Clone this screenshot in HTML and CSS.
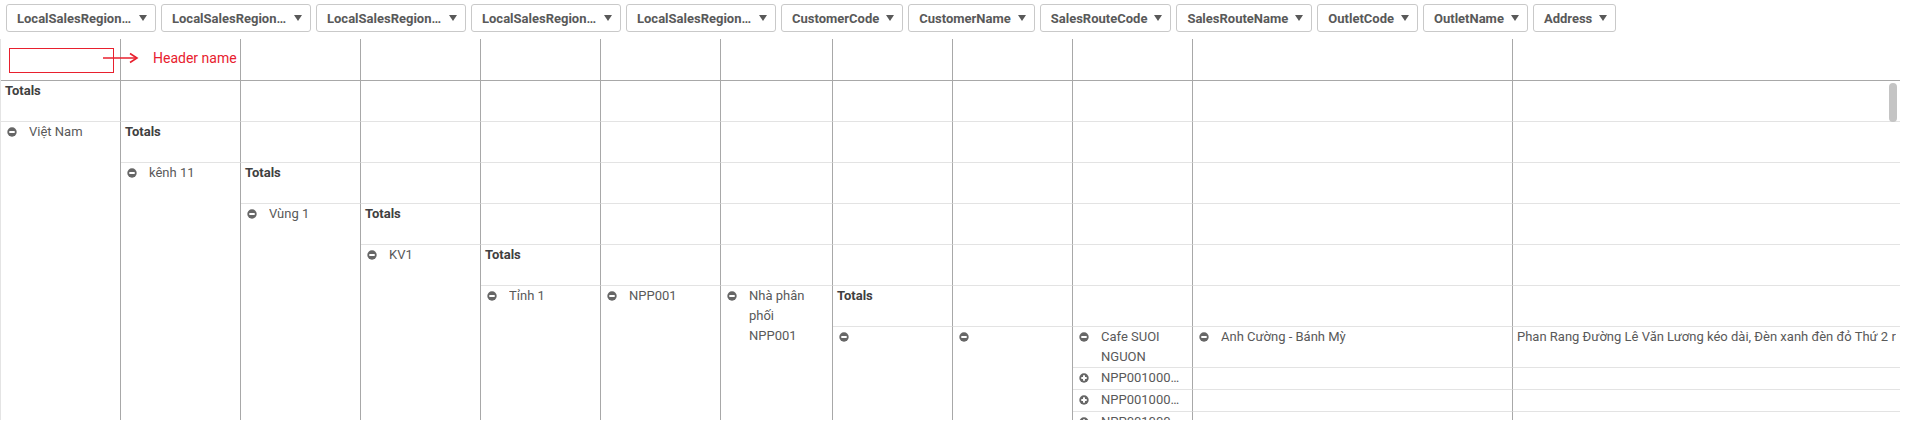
FILE: index.html
```html
<!DOCTYPE html>
<html lang="vi">
<head>
<meta charset="utf-8">
<title>Pivot table</title>
<link rel="stylesheet" href="styles.css">
</head>
<body>
<div class="sheet">
  <div class="toolbar">
    <button class="dim dim-fixed"><span class="dim-label">LocalSalesRegionLevel1</span><svg class="caret" viewBox="0 0 8 6"><path d="M0 0H8L4 6Z"/></svg></button>
    <button class="dim dim-fixed"><span class="dim-label">LocalSalesRegionLevel2</span><svg class="caret" viewBox="0 0 8 6"><path d="M0 0H8L4 6Z"/></svg></button>
    <button class="dim dim-fixed"><span class="dim-label">LocalSalesRegionLevel3</span><svg class="caret" viewBox="0 0 8 6"><path d="M0 0H8L4 6Z"/></svg></button>
    <button class="dim dim-fixed"><span class="dim-label">LocalSalesRegionLevel4</span><svg class="caret" viewBox="0 0 8 6"><path d="M0 0H8L4 6Z"/></svg></button>
    <button class="dim dim-fixed"><span class="dim-label">LocalSalesRegionLevel5</span><svg class="caret" viewBox="0 0 8 6"><path d="M0 0H8L4 6Z"/></svg></button>
    <button class="dim"><span class="dim-label">CustomerCode</span><svg class="caret" viewBox="0 0 8 6"><path d="M0 0H8L4 6Z"/></svg></button>
    <button class="dim"><span class="dim-label">CustomerName</span><svg class="caret" viewBox="0 0 8 6"><path d="M0 0H8L4 6Z"/></svg></button>
    <button class="dim"><span class="dim-label">SalesRouteCode</span><svg class="caret" viewBox="0 0 8 6"><path d="M0 0H8L4 6Z"/></svg></button>
    <button class="dim"><span class="dim-label">SalesRouteName</span><svg class="caret" viewBox="0 0 8 6"><path d="M0 0H8L4 6Z"/></svg></button>
    <button class="dim"><span class="dim-label">OutletCode</span><svg class="caret" viewBox="0 0 8 6"><path d="M0 0H8L4 6Z"/></svg></button>
    <button class="dim"><span class="dim-label">OutletName</span><svg class="caret" viewBox="0 0 8 6"><path d="M0 0H8L4 6Z"/></svg></button>
    <button class="dim"><span class="dim-label">Address</span><svg class="caret" viewBox="0 0 8 6"><path d="M0 0H8L4 6Z"/></svg></button>
  </div>

  <div class="pivot">
    <!-- header row -->
    <div class="cell head"></div><div class="cell head"></div><div class="cell head"></div><div class="cell head"></div>
    <div class="cell head"></div><div class="cell head"></div><div class="cell head"></div><div class="cell head"></div>
    <div class="cell head"></div><div class="cell head"></div><div class="cell head"></div><div class="cell head c-end"></div>

    <!-- grand totals: Totals + 11 empty -->
    <div class="cell total">Totals</div>
    <div class="cell"></div><div class="cell"></div><div class="cell"></div><div class="cell"></div><div class="cell"></div>
    <div class="cell"></div><div class="cell"></div><div class="cell"></div><div class="cell"></div><div class="cell"></div>
    <div class="cell c-end"></div>

    <!-- Việt Nam: node + Totals + 10 empty -->
    <div class="cell node span-9"><svg class="tog" viewBox="0 0 10 10"><circle cx="5" cy="5" r="4.7"/><rect x="2.3" y="4" width="5.4" height="2"/></svg><span class="txt">Việt Nam</span></div>
    <div class="cell total">Totals</div>
    <div class="cell"></div><div class="cell"></div><div class="cell"></div><div class="cell"></div><div class="cell"></div>
    <div class="cell"></div><div class="cell"></div><div class="cell"></div><div class="cell"></div>
    <div class="cell c-end"></div>

    <!-- kênh 11: node + Totals + 9 empty -->
    <div class="cell node span-8"><svg class="tog" viewBox="0 0 10 10"><circle cx="5" cy="5" r="4.7"/><rect x="2.3" y="4" width="5.4" height="2"/></svg><span class="txt">kênh 11</span></div>
    <div class="cell total">Totals</div>
    <div class="cell"></div><div class="cell"></div><div class="cell"></div><div class="cell"></div>
    <div class="cell"></div><div class="cell"></div><div class="cell"></div><div class="cell"></div>
    <div class="cell c-end"></div>

    <!-- Vùng 1: node + Totals + 8 empty -->
    <div class="cell node span-7"><svg class="tog" viewBox="0 0 10 10"><circle cx="5" cy="5" r="4.7"/><rect x="2.3" y="4" width="5.4" height="2"/></svg><span class="txt">Vùng 1</span></div>
    <div class="cell total">Totals</div>
    <div class="cell"></div><div class="cell"></div><div class="cell"></div><div class="cell"></div>
    <div class="cell"></div><div class="cell"></div><div class="cell"></div>
    <div class="cell c-end"></div>

    <!-- KV1: node + Totals + 7 empty -->
    <div class="cell node span-6"><svg class="tog" viewBox="0 0 10 10"><circle cx="5" cy="5" r="4.7"/><rect x="2.3" y="4" width="5.4" height="2"/></svg><span class="txt">KV1</span></div>
    <div class="cell total">Totals</div>
    <div class="cell"></div><div class="cell"></div><div class="cell"></div>
    <div class="cell"></div><div class="cell"></div><div class="cell"></div>
    <div class="cell c-end"></div>

    <!-- Tỉnh 1 / NPP001 / Nhà phân phối + Totals + 4 empty -->
    <div class="cell node span-5"><svg class="tog" viewBox="0 0 10 10"><circle cx="5" cy="5" r="4.7"/><rect x="2.3" y="4" width="5.4" height="2"/></svg><span class="txt">Tỉnh 1</span></div>
    <div class="cell node span-5"><svg class="tog" viewBox="0 0 10 10"><circle cx="5" cy="5" r="4.7"/><rect x="2.3" y="4" width="5.4" height="2"/></svg><span class="txt">NPP001</span></div>
    <div class="cell node span-5"><svg class="tog" viewBox="0 0 10 10"><circle cx="5" cy="5" r="4.7"/><rect x="2.3" y="4" width="5.4" height="2"/></svg><span class="txt wrap">Nhà phân phối NPP001</span></div>
    <div class="cell total">Totals</div>
    <div class="cell"></div><div class="cell"></div><div class="cell"></div>
    <div class="cell c-end"></div>

    <!-- customer level -->
    <div class="cell node span-4"><svg class="tog" viewBox="0 0 10 10"><circle cx="5" cy="5" r="4.7"/><rect x="2.3" y="4" width="5.4" height="2"/></svg><span class="txt"></span></div>
    <div class="cell node span-4"><svg class="tog" viewBox="0 0 10 10"><circle cx="5" cy="5" r="4.7"/><rect x="2.3" y="4" width="5.4" height="2"/></svg><span class="txt"></span></div>
    <div class="cell node"><svg class="tog" viewBox="0 0 10 10"><circle cx="5" cy="5" r="4.7"/><rect x="2.3" y="4" width="5.4" height="2"/></svg><span class="txt wrap">Cafe SUOI NGUON</span></div>
    <div class="cell node"><svg class="tog" viewBox="0 0 10 10"><circle cx="5" cy="5" r="4.7"/><rect x="2.3" y="4" width="5.4" height="2"/></svg><span class="txt">Anh Cường - Bánh Mỳ</span></div>
    <div class="cell c-end"><span class="txt clip">Phan Rang Đường Lê Văn Lương kéo dài, Đèn xanh đèn đỏ Thứ 2 rẽ phải</span></div>

    <div class="cell node"><svg class="tog" viewBox="0 0 10 10"><circle cx="5" cy="5" r="4.7"/><rect x="2.3" y="4" width="5.4" height="2"/><rect x="4" y="2.3" width="2" height="5.4"/></svg><span class="txt">NPP0010001234</span></div>
    <div class="cell"></div><div class="cell c-end"></div>

    <div class="cell node"><svg class="tog" viewBox="0 0 10 10"><circle cx="5" cy="5" r="4.7"/><rect x="2.3" y="4" width="5.4" height="2"/><rect x="4" y="2.3" width="2" height="5.4"/></svg><span class="txt">NPP0010001235</span></div>
    <div class="cell"></div><div class="cell c-end"></div>

    <div class="cell node"><svg class="tog" viewBox="0 0 10 10"><circle cx="5" cy="5" r="4.7"/><rect x="2.3" y="4" width="5.4" height="2"/><rect x="4" y="2.3" width="2" height="5.4"/></svg><span class="txt">NPP0010001236</span></div>
    <div class="cell"></div><div class="cell c-end"></div>
  </div>

  <div class="annot-box"></div>
  <svg class="annot-arrow" viewBox="0 0 38 12"><path d="M1 6H34"/><path d="M28 1.5L35 6L28 10.5"/></svg>
  <div class="annot-text">Header name</div>

  <div class="vscroll"></div>
</div>
</body>
</html>
```

FILE: styles.css
```css
html, body {
  margin: 0;
  padding: 0;
  background: #ffffff;
}

body {
  width: 1909px;
  height: 424px;
  overflow: hidden;
  font-family: Roboto, "Liberation Sans", Arial, sans-serif;
}

.sheet {
  position: relative;
  width: 1909px;
  height: 424px;
}

/* ---------- dimension buttons ---------- */
.toolbar {
  display: flex;
  align-items: flex-start;
  gap: 5px;
  height: 39px;
  padding: 4px 0 0 6px;
  box-sizing: border-box;
}

.dim {
  display: flex;
  align-items: center;
  gap: 7px;
  flex: none;
  height: 28px;
  margin: 0;
  padding: 0 8px 0 10px;
  box-sizing: border-box;
  border: 1px solid #c9c9c9;
  border-radius: 3px;
  background: #ffffff;
  font-family: Roboto, "Liberation Sans", Arial, sans-serif;
  font-size: 13px;
  font-weight: 700;
  color: #595959;
  cursor: pointer;
}

.dim-fixed {
  width: 150px;
}

.dim-label {
  white-space: nowrap;
}

.dim-fixed .dim-label {
  flex: 1 1 auto;
  min-width: 0;
  overflow: hidden;
  text-overflow: ellipsis;
  text-align: left;
}

.caret {
  flex: none;
  width: 8px;
  height: 6px;
  fill: #595959;
}

/* ---------- pivot grid ---------- */
.pivot {
  display: grid;
  grid-template-columns: 120px 120px 120px 120px 120px 120px 112px 120px 120px 120px 320px 387px;
  grid-template-rows: 42px repeat(7, 41px) repeat(3, 22px);
  width: 1900px;
  height: 381px;
  overflow: hidden;
  box-sizing: border-box;
  border-left: 1px solid #e4e4e4;
}

.cell {
  box-sizing: border-box;
  min-width: 0;
  padding: 0 4px;
  border-right: 1px solid #a8a8a8;
  border-bottom: 1px solid #e3e3e3;
  font-size: 13px;
  line-height: 20px;
  color: #595959;
  overflow: hidden;
}

.cell.head {
  border-bottom-color: #a8a8a8;
}

.cell.c-end {
  border-right: none;
}

.cell.total {
  font-weight: 700;
  color: #404040;
}

.node {
  display: flex;
  align-items: flex-start;
}

.tog {
  flex: none;
  width: 10px;
  height: 10px;
  margin: 5px 12px 0 2px;
  fill: #ffffff;
}

.tog circle {
  fill: #666666;
}

.txt {
  display: block;
  min-width: 0;
  flex: 1 1 auto;
  white-space: nowrap;
  overflow: hidden;
  text-overflow: ellipsis;
}

.node .txt {
  padding-right: 8px;
}

.txt.wrap {
  white-space: normal;
}

.txt.clip {
  text-overflow: clip;
}

.span-9 { grid-row: span 9; }
.span-8 { grid-row: span 8; }
.span-7 { grid-row: span 7; }
.span-6 { grid-row: span 6; }
.span-5 { grid-row: span 5; }
.span-4 { grid-row: span 4; }

/* ---------- annotation overlay ---------- */
.annot-box {
  position: absolute;
  left: 9px;
  top: 48px;
  width: 105px;
  height: 25px;
  box-sizing: border-box;
  border: 1px solid #e8202e;
}

.annot-arrow {
  position: absolute;
  left: 102px;
  top: 52px;
  width: 38px;
  height: 12px;
  fill: none;
  stroke: #e8202e;
  stroke-width: 1.6;
}

.annot-text {
  position: absolute;
  left: 153px;
  top: 49px;
  font-size: 14px;
  line-height: 18px;
  color: #e8202e;
  white-space: nowrap;
}

/* ---------- overlay scrollbar ---------- */
.vscroll {
  position: absolute;
  left: 1889px;
  top: 83px;
  width: 8px;
  height: 39px;
  border-radius: 4px;
  background: #c4c4c4;
}
```
